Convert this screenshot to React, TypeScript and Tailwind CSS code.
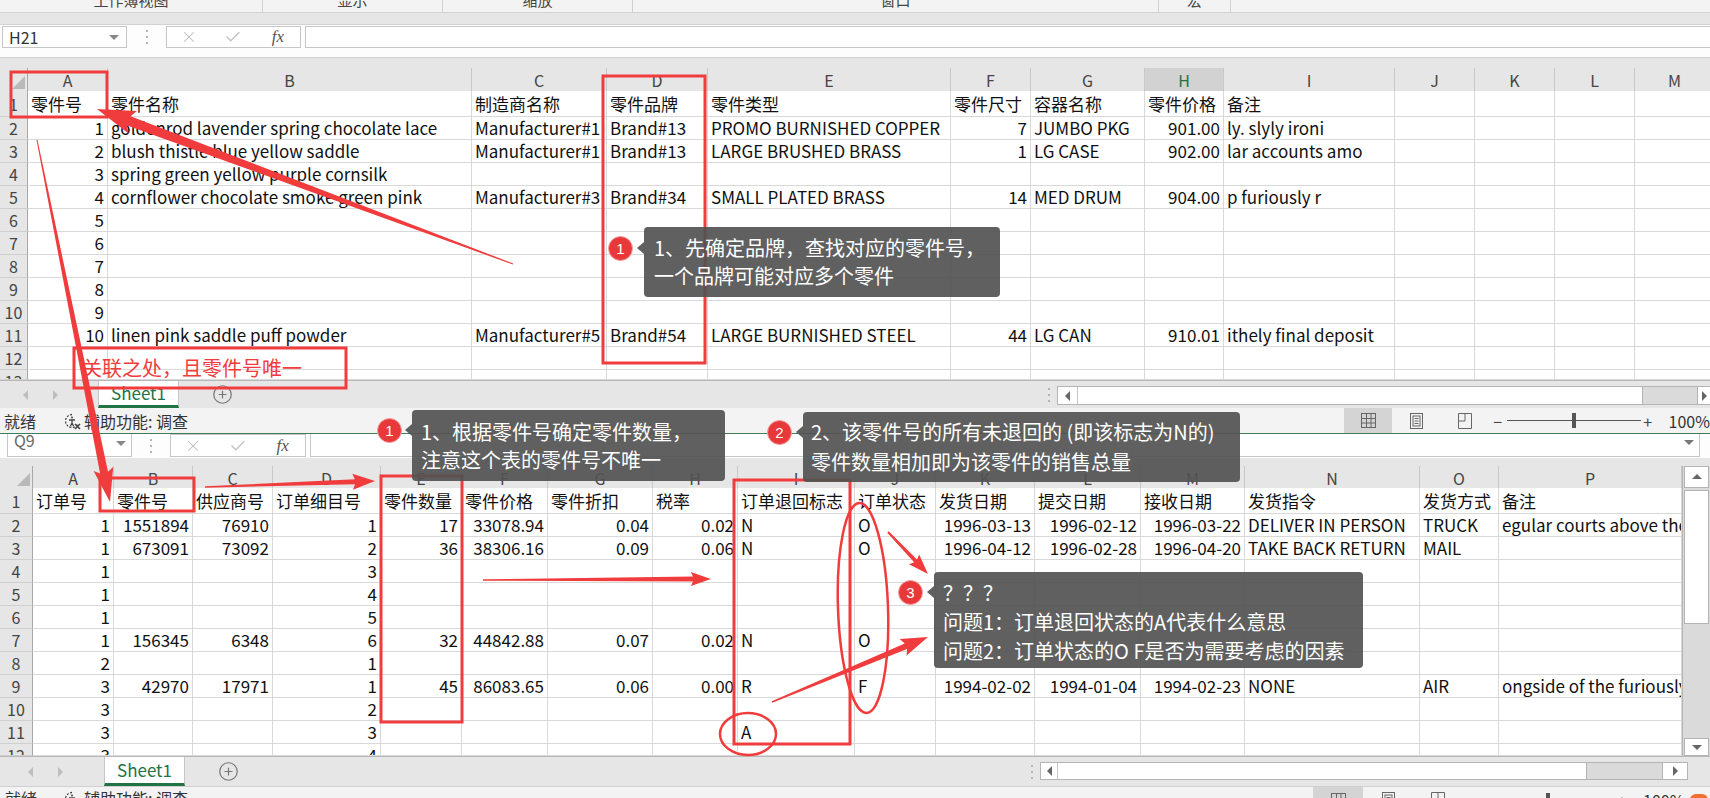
import React from "react";
import { X, Check, CirclePlus } from "lucide-react";

const TOP_COLS =
  "grid grid-cols-[28px_80px_364px_135px_101px_243px_80px_114px_79px_171px_80px_80px_80px_80px]";
const BOT_COLS =
  "grid grid-cols-[33px_81px_79px_80px_108px_81px_86px_105px_85px_117px_81px_99px_106px_104px_175px_79px_183px]";

const topLetters = ["A", "B", "C", "D", "E", "F", "G", "H", "I", "J", "K", "L", "M"];
const botLetters = ["A", "B", "C", "D", "E", "F", "G", "H", "I", "J", "K", "L", "M", "N", "O", "P"];

const topRows: string[][] = [
  ["零件号", "零件名称", "制造商名称", "零件品牌", "零件类型", "零件尺寸", "容器名称", "零件价格", "备注"],
  ["1", "goldenrod lavender spring chocolate lace", "Manufacturer#1", "Brand#13", "PROMO BURNISHED COPPER", "7", "JUMBO PKG", "901.00", "ly. slyly ironi"],
  ["2", "blush thistle blue yellow saddle", "Manufacturer#1", "Brand#13", "LARGE BRUSHED BRASS", "1", "LG CASE", "902.00", "lar accounts amo"],
  ["3", "spring green yellow purple cornsilk"],
  ["4", "cornflower chocolate smoke green pink", "Manufacturer#3", "Brand#34", "SMALL PLATED BRASS", "14", "MED DRUM", "904.00", "p furiously r"],
  ["5"],
  ["6"],
  ["7"],
  ["8"],
  ["9"],
  ["10", "linen pink saddle puff powder", "Manufacturer#5", "Brand#54", "LARGE BURNISHED STEEL", "44", "LG CAN", "910.01", "ithely final deposit"],
  [],
  [],
];

const botRows: string[][] = [
  ["订单号", "零件号", "供应商号", "订单细目号", "零件数量", "零件价格", "零件折扣", "税率", "订单退回标志", "订单状态", "发货日期", "提交日期", "接收日期", "发货指令", "发货方式", "备注"],
  ["1", "1551894", "76910", "1", "17", "33078.94", "0.04", "0.02", "N", "O", "1996-03-13", "1996-02-12", "1996-03-22", "DELIVER IN PERSON", "TRUCK", "egular courts above the"],
  ["1", "673091", "73092", "2", "36", "38306.16", "0.09", "0.06", "N", "O", "1996-04-12", "1996-02-28", "1996-04-20", "TAKE BACK RETURN", "MAIL"],
  ["1", "", "", "3"],
  ["1", "", "", "4"],
  ["1", "", "", "5"],
  ["1", "156345", "6348", "6", "32", "44842.88", "0.07", "0.02", "N", "O"],
  ["2", "", "", "1"],
  ["3", "42970", "17971", "1", "45", "86083.65", "0.06", "0.00", "R", "F", "1994-02-02", "1994-01-04", "1994-02-23", "NONE", "AIR", "ongside of the furiously"],
  ["3", "", "", "2"],
  ["3", "", "", "3", "", "", "", "", "A"],
  ["3", "", "", "4"],
];

function Cell({ v, first }: { v: string; first?: boolean }) {
  const right = /^[\d.\-]+$/.test(v);
  return (
    <div
      className={
        "overflow-hidden whitespace-nowrap border-r border-b border-[#d9d9d9] bg-white px-[3px] leading-[22px] flex " +
        (right ? "justify-end " : "justify-start ") +
        (first ? "pt-[2px]" : "")
      }
    >
      {v}
    </div>
  );
}

function RowHdr({ n, first }: { n: string; first?: boolean }) {
  return (
    <div
      className={
        "overflow-hidden bg-[#e6e6e6] border-r border-[#a8a8a8] border-b border-b-[#cfcfcf] text-[#444] text-[16px] leading-[22px] flex justify-center " +
        (first ? "pt-[2px]" : "")
      }
    >
      {n}
    </div>
  );
}

function Corner() {
  return (
    <div className="bg-[#e6e6e6] border-r border-b border-[#a8a8a8] flex items-end justify-end pr-[2px] pb-[3px]">
      <svg width="13" height="13" viewBox="0 0 13 13">
        <polygon points="13,0 13,13 0,13" fill="#b9b9b9" />
      </svg>
    </div>
  );
}

function ColHdr({ l, sel }: { l: string; sel?: boolean }) {
  return (
    <div
      className={
        "flex justify-center pt-[1px] leading-[22px] text-[16px] border-r border-[#c8c8c8] " +
        (sel
          ? "bg-[#d2d2d2] text-[#217346] border-b-2 border-b-[#217346]"
          : "bg-[#e6e6e6] text-[#444] border-b border-b-[#a8a8a8]")
      }
    >
      {l}
    </div>
  );
}

function Tri({ dir, color = "#bdbdbd" }: { dir: "l" | "r" | "u" | "d"; color?: string }) {
  const pts =
    dir === "l" ? "7,1 7,11 2,6" : dir === "r" ? "2,1 2,11 7,6" : dir === "u" ? "1,8 11,8 6,3" : "1,4 11,4 6,9";
  const w = dir === "l" || dir === "r" ? 9 : 12;
  const h = dir === "l" || dir === "r" ? 12 : 12;
  return (
    <svg width={w} height={h} viewBox={`0 0 ${w} ${h}`}>
      <polygon points={pts} fill={color} />
    </svg>
  );
}

function Dots() {
  return (
    <svg width="4" height="16" viewBox="0 0 4 16">
      <rect x="1" y="1" width="2" height="2" fill="#b5b5b5" />
      <rect x="1" y="7" width="2" height="2" fill="#b5b5b5" />
      <rect x="1" y="13" width="2" height="2" fill="#b5b5b5" />
    </svg>
  );
}

function FxBox() {
  return (
    <div className="flex h-full border border-[#c6c6c6] bg-white">
      <div className="w-[45px] flex items-center justify-center">
        <X size={18} strokeWidth={1.4} color="#bdbdbd" />
      </div>
      <div className="w-[45px] flex items-center justify-center">
        <Check size={18} strokeWidth={2} color="#c4c4c4" />
      </div>
      <div className="w-[45px] flex items-center justify-center font-['Liberation_Serif',serif] italic text-[17px] text-[#555]">
        fx
      </div>
    </div>
  );
}

function AccIcon() {
  return (
    <svg width="18" height="18" viewBox="0 0 18 18" fill="none" stroke="#444" strokeWidth="1.3">
      <path d="M9 2.5 A6.5 6.5 0 1 0 14.5 12.5" strokeDasharray="2 1.5" />
      <circle cx="9" cy="5.5" r="1" fill="#444" stroke="none" />
      <path d="M6 8 H12 M9 8 V11 L7.5 14 M9 11 L10.5 14" />
      <path d="M12 12 L17 17 M17 12 L12 17" strokeWidth="1.6" />
    </svg>
  );
}

function ViewIcons({ w }: { w: string }) {
  return (
    <>
      <div className={"h-full flex items-center justify-center bg-[#d4d4d4] " + w}>
        <svg width="17" height="17" viewBox="0 0 17 17" fill="none" stroke="#666" strokeWidth="1">
          <rect x="1.5" y="1.5" width="14" height="14" />
          <path d="M6.5 1.5 V15.5 M11 1.5 V15.5 M1.5 6.5 H15.5 M1.5 11 H15.5" />
        </svg>
      </div>
      <div className={"h-full flex items-center justify-center " + w}>
        <svg width="15" height="18" viewBox="0 0 15 18" fill="none" stroke="#666" strokeWidth="1">
          <rect x="1.5" y="1.5" width="12" height="15" />
          <rect x="4" y="4" width="7" height="10" />
          <path d="M5.5 6.5 H9.5 M5.5 9 H9.5 M5.5 11.5 H9.5" />
        </svg>
      </div>
      <div className={"h-full flex items-center justify-center " + w}>
        <svg width="16" height="18" viewBox="0 0 16 18" fill="none" stroke="#666" strokeWidth="1">
          <path d="M1.5 1.5 H14.5 V16.5 H1.5 Z M8 1.5 V9 M1.5 9 H8" />
        </svg>
      </div>
    </>
  );
}

function ZoomSlider({ lineW }: { lineW: string }) {
  return (
    <div className="flex items-center h-full text-[#444]">
      <div className="w-[18px] flex justify-center text-[16px]">−</div>
      <div className={"relative h-[1px] bg-[#555] " + lineW}>
        <div className="absolute left-1/2 -translate-x-1/2 -top-[7px] w-[4px] h-[15px] bg-[#555]" />
      </div>
      <div className="w-[14px] flex justify-center text-[16px]">+</div>
    </div>
  );
}

function tapered(x1: number, y1: number, x2: number, y2: number, tw: number, sw: number, hw: number, hl: number) {
  const dx = x2 - x1;
  const dy = y2 - y1;
  const L = Math.hypot(dx, dy);
  const ux = dx / L;
  const uy = dy / L;
  const nx = -uy;
  const ny = ux;
  const bx = x2 - ux * hl;
  const by = y2 - uy * hl;
  const hbx = x2 - ux * hl * 1.12;
  const hby = y2 - uy * hl * 1.12;
  const p = [
    [x1 + (nx * tw) / 2, y1 + (ny * tw) / 2],
    [bx + (nx * sw) / 2, by + (ny * sw) / 2],
    [hbx + (nx * hw) / 2, hby + (ny * hw) / 2],
    [x2, y2],
    [hbx - (nx * hw) / 2, hby - (ny * hw) / 2],
    [bx - (nx * sw) / 2, by - (ny * sw) / 2],
    [x1 - (nx * tw) / 2, y1 - (ny * tw) / 2],
  ];
  return p.map((q) => q[0].toFixed(1) + "," + q[1].toFixed(1)).join(" ");
}

const RED = "#f03c3c";

function Overlay() {
  const arrows = [
    tapered(513, 264, 97, 109, 1, 10, 24, 34),
    tapered(37, 140, 110, 502, 1, 8, 20, 30),
    tapered(205, 487, 375, 481, 1.5, 5, 16, 20),
    tapered(483, 580, 711, 579, 1.5, 5, 14, 18),
    tapered(888, 532, 928, 574, 2, 4, 14, 18),
    tapered(772, 702, 928, 637, 1.5, 6, 18, 24),
  ];
  return (
    <svg className="absolute left-0 top-0 pointer-events-none" width="1710" height="798" viewBox="0 0 1710 798">
      <g fill="none" stroke={RED} strokeWidth="3">
        <rect x="11" y="72" width="96" height="45" />
        <rect x="603" y="76" width="102" height="287" />
        <rect x="74" y="348" width="272" height="40" />
        <rect x="100" y="478" width="94" height="33" />
        <rect x="381" y="476" width="81" height="246" />
        <rect x="734" y="480" width="116" height="264" />
      </g>
      <g fill="none" stroke={RED} strokeWidth="2.5">
        <ellipse cx="748" cy="734" rx="28" ry="21" />
        <ellipse cx="863" cy="608" rx="25" ry="105" transform="rotate(-2 863 608)" />
      </g>
      <g fill={RED}>
        {arrows.map((a, i) => (
          <polygon key={i} points={a} />
        ))}
      </g>
    </svg>
  );
}

function Badge({ n, cls }: { n: string; cls: string }) {
  return (
    <div
      className={
        "absolute w-[25px] h-[25px] rounded-full bg-[#e8383a] border border-[#f6a0a0] text-white text-[15px] leading-none flex items-center justify-center font-['Liberation_Sans',sans-serif] " +
        cls
      }
    >
      {n}
    </div>
  );
}

function Pointer({ cls }: { cls: string }) {
  return (
    <div
      className={
        "absolute left-[-7px] w-0 h-0 border-y-[6px] border-y-transparent border-r-[7px] border-r-[rgba(82,82,82,0.92)] " + cls
      }
    />
  );
}

function Callouts() {
  const box = "absolute rounded-[4px] bg-[rgba(82,82,82,0.92)] text-white text-[20px] whitespace-nowrap";
  return (
    <>
      <Badge n="1" cls="left-[608px] top-[236px]" />
      <div className={box + " left-[644px] top-[227px] w-[356px] h-[70px] pl-[10px] pt-[7px] leading-[28px]"}>
        <Pointer cls="top-[15px]" />
        <p>1、先确定品牌，查找对应的零件号，</p>
        <p>一个品牌可能对应多个零件</p>
      </div>

      <Badge n="1" cls="left-[377px] top-[418px]" />
      <div className={box + " left-[412px] top-[410px] w-[313px] h-[71px] pl-[9px] pt-[8px] leading-[28px]"}>
        <Pointer cls="top-[14px]" />
        <p>1、根据零件号确定零件数量，</p>
        <p>注意这个表的零件号不唯一</p>
      </div>

      <Badge n="2" cls="left-[767px] top-[420px]" />
      <div className={box + " left-[803px] top-[412px] w-[437px] h-[70px] pl-[8px] pt-[5px] leading-[30px]"}>
        <Pointer cls="top-[14px]" />
        <p>2、该零件号的所有未退回的 (即该标志为N的)</p>
        <p>零件数量相加即为该零件的销售总量</p>
      </div>

      <Badge n="3" cls="left-[898px] top-[580px]" />
      <div className={box + " left-[934px] top-[572px] w-[429px] h-[96px] pl-[9px] pt-[6px] leading-[29px]"}>
        <Pointer cls="top-[14px]" />
        <p>？？？</p>
        <p>问题1：订单退回状态的A代表什么意思</p>
        <p>问题2：订单状态的O F是否为需要考虑的因素</p>
      </div>

      <div className="absolute left-[82px] top-[354px] text-[20px] leading-[28px] text-[#f03c3c] whitespace-nowrap">
        关联之处，且零件号唯一
      </div>
    </>
  );
}

function TopWindow() {
  const segs = [
    { w: "w-[263px]", t: "工作簿视图" },
    { w: "w-[180px]", t: "显示" },
    { w: "w-[190px]", t: "缩放" },
    { w: "w-[526px]", t: "窗口" },
    { w: "w-[72px]", t: "宏" },
  ];
  return (
    <div className="flex flex-col">
      {/* ribbon group labels */}
      <div className="h-[12px] bg-[#f3f3f3] flex overflow-hidden">
        {segs.map((s) => (
          <div key={s.t} className={"flex justify-center border-r border-[#d0d0d0] h-full " + s.w}>
            <span className="-mt-[8px] leading-[16px] text-[15px] text-[#444]">{s.t}</span>
          </div>
        ))}
      </div>
      <div className="h-[13px] bg-[#e6e6e6] border-y border-[#d2d2d2]" />
      {/* formula bar */}
      <div className="h-[32px] bg-[#fdfdfd] flex items-start pt-[1px]">
        <div className="ml-[2px] w-[125px] h-[22px] border border-[#c6c6c6] bg-white flex items-center justify-between pl-[6px] pr-[6px] text-[16px] text-[#333]">
          <span>H21</span>
          <Tri dir="d" color="#888" />
        </div>
        <div className="w-[39px] h-[22px] flex items-center justify-center">
          <Dots />
        </div>
        <div className="w-[135px] h-[22px]">
          <FxBox />
        </div>
        <div className="ml-[4px] flex-1 h-[22px] border border-[#c6c6c6] border-r-0 bg-white" />
      </div>
      <div className="h-[11px] bg-[#e6e6e6] border-t border-[#d2d2d2]" />
      {/* column headers */}
      <div className={TOP_COLS + " h-[23px]"}>
        <Corner />
        {topLetters.map((l) => (
          <ColHdr key={l} l={l} sel={l === "H"} />
        ))}
      </div>
      {topRows.map((r, i) => (
        <div
          key={i}
          className={TOP_COLS + " overflow-hidden " + (i === 0 ? "h-[26px]" : i === 12 ? "h-[10px]" : "h-[23px]")}
        >
          <RowHdr n={String(i + 1)} first={i === 0} />
          {topLetters.map((_, j) => (
            <Cell key={j} v={r[j] ?? ""} first={i === 0} />
          ))}
        </div>
      ))}
      {/* sheet tabs */}
      <div className="h-[28px] bg-[#e6e6e6] border-t border-[#b8b8b8] flex items-stretch">
        <div className="w-[98px] flex items-center pl-[21px] gap-[21px]">
          <Tri dir="l" />
          <Tri dir="r" />
        </div>
        <div className="w-[81px] bg-white border-x border-[#c6c6c6] border-b-[3px] border-b-[#217346] flex items-center justify-center text-[17px] text-[#217346]">
          Sheet1
        </div>
        <div className="ml-[33px] flex items-center">
          <CirclePlus size={21} strokeWidth={1.4} color="#777" />
        </div>
        <div className="flex-1" />
        <div className="w-[17px] flex items-center justify-center">
          <Dots />
        </div>
        <div className="w-[653px] h-[19px] mt-[5px] flex border border-[#b4b4b4] border-r-0 bg-[#dadada]">
          <div className="w-[20px] bg-white border-r border-[#c6c6c6] flex items-center justify-center">
            <Tri dir="l" color="#666" />
          </div>
          <div className="w-[565px] bg-white border-r border-[#b4b4b4]" />
          <div className="flex-1" />
          <div className="w-[13px] bg-white border-l border-[#b4b4b4] flex items-center justify-center">
            <Tri dir="r" color="#666" />
          </div>
        </div>
      </div>
      {/* status bar */}
      <div className="h-[26px] bg-[#f3f3f3] border-b border-[#3f7d58] flex items-center text-[16px] text-[#333]">
        <span className="pl-[4px]">就绪</span>
        <span className="ml-[27px] flex items-center">
          <AccIcon />
        </span>
        <span className="ml-[3px]">辅助功能: 调查</span>
        <div className="flex-1" />
        <div className="w-[366px] h-full flex items-center">
          <ViewIcons w="w-[50px]" />
          <ZoomSlider lineW="w-[134px]" />
          <span className="ml-[14px] text-[#333]">100%</span>
        </div>
      </div>
    </div>
  );
}

function BottomWindow() {
  return (
    <div className="flex flex-col">
      {/* formula bar (partially hidden) */}
      <div className="h-[24px] bg-[#fdfdfd] flex items-start overflow-hidden">
        <div className="ml-[7px] w-[125px] h-[23px] border border-t-0 border-[#c6c6c6] bg-white flex items-start justify-between pl-[6px] pr-[4px] text-[16px] text-[#666]">
          <span className="-mt-[5px] leading-[22px]">Q9</span>
          <span className="mt-[3px]">
            <Tri dir="d" color="#888" />
          </span>
        </div>
        <div className="w-[38px] h-[23px] flex items-center justify-center">
          <Dots />
        </div>
        <div className="w-[136px] h-[23px]">
          <FxBox />
        </div>
        <div className="ml-[4px] w-[1390px] h-[23px] border border-t-0 border-[#c6c6c6] bg-white flex items-start justify-end pr-[4px]">
          <span className="mt-[2px]">
            <Tri dir="d" color="#777" />
          </span>
        </div>
      </div>
      <div className="h-[8px] bg-[#e6e6e6]" />
      <div className="flex">
        <div className="w-[1682px] flex flex-col">
          <div className={BOT_COLS + " h-[22px]"}>
            <Corner />
            {botLetters.map((l) => (
              <ColHdr key={l} l={l} />
            ))}
          </div>
          {botRows.map((r, i) => (
            <div
              key={i}
              className={BOT_COLS + " overflow-hidden " + (i === 0 ? "h-[26px]" : i === 11 ? "h-[12px]" : "h-[23px]")}
            >
              <RowHdr n={String(i + 1)} first={i === 0} />
              {botLetters.map((_, j) => (
                <Cell key={j} v={r[j] ?? ""} first={i === 0} />
              ))}
            </div>
          ))}
        </div>
        {/* vertical scrollbar */}
        <div className="w-[28px] h-[290px] flex flex-col bg-[#dadada] border-l border-[#b4b4b4] px-[1px]">
          <div className="h-[22px] bg-white border border-[#b4b4b4] flex items-center justify-center">
            <Tri dir="u" color="#666" />
          </div>
          <div className="h-[134px] mt-[2px] bg-white border border-[#b4b4b4]" />
          <div className="flex-1" />
          <div className="h-[18px] bg-white border border-[#b4b4b4] flex items-center justify-center">
            <Tri dir="d" color="#666" />
          </div>
        </div>
      </div>
      {/* tabs */}
      <div className="h-[30px] bg-[#e6e6e6] border-t border-[#b8b8b8] flex items-stretch">
        <div className="w-[104px] flex items-center pl-[26px] gap-[21px]">
          <Tri dir="l" />
          <Tri dir="r" />
        </div>
        <div className="w-[81px] bg-white border-x border-[#c6c6c6] border-b-[3px] border-b-[#217346] flex items-center justify-center text-[17px] text-[#217346]">
          Sheet1
        </div>
        <div className="ml-[33px] flex items-center">
          <CirclePlus size={21} strokeWidth={1.4} color="#777" />
        </div>
        <div className="flex-1" />
        <div className="w-[17px] flex items-center justify-center">
          <Dots />
        </div>
        <div className="w-[648px] h-[18px] mt-[5px] flex border border-[#b4b4b4] bg-[#dadada]">
          <div className="w-[17px] bg-white border-r border-[#c6c6c6] flex items-center justify-center">
            <Tri dir="l" color="#666" />
          </div>
          <div className="w-[529px] bg-white border-r border-[#b4b4b4]" />
          <div className="flex-1" />
          <div className="w-[25px] bg-white border-l border-[#b4b4b4] flex items-center justify-center">
            <Tri dir="r" color="#666" />
          </div>
        </div>
        <div className="w-[22px]" />
      </div>
      {/* status (cut) */}
      <div className="h-[12px] bg-[#f3f3f3] border-t border-[#d0d0d0] flex items-start overflow-hidden text-[16px] text-[#333]">
        <span className="pl-[5px] leading-[22px]">就绪</span>
        <span className="ml-[26px] mt-[3px]">
          <AccIcon />
        </span>
        <span className="ml-[3px] leading-[22px]">辅助功能: 调查</span>
        <div className="flex-1" />
        <div className="w-[397px] h-[26px] flex items-center">
          <ViewIcons w="w-[50px]" />
          <ZoomSlider lineW="w-[134px]" />
          <span className="ml-[14px]">100%</span>
          <span className="ml-[6px] w-[18px] h-[12px] rounded-full bg-[#f07030]" />
        </div>
      </div>
    </div>
  );
}

export default function App() {
  return (
    <div className="relative w-[1710px] h-[798px] overflow-hidden bg-white text-[17px] text-[#111] font-['Noto_Sans_CJK_SC','Noto_Sans',sans-serif]">
      <TopWindow />
      <BottomWindow />
      <Overlay />
      <Callouts />
    </div>
  );
}
